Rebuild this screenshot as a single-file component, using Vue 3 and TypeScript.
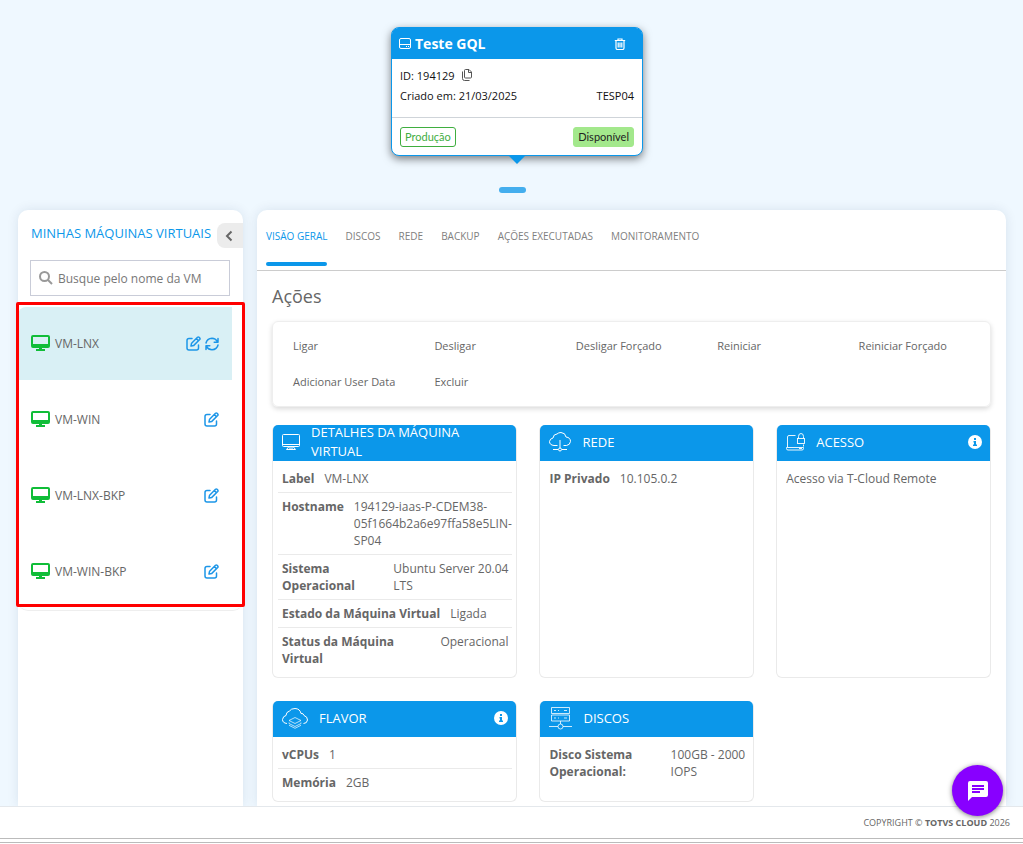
<script setup lang="ts">
import { computed, ref } from 'vue'

interface Row {
  label?: string
  /** Opening words of the value that stay together on one line. */
  lead?: string
  value: string
}

interface InfoCard {
  key: string
  title: string
  info?: boolean
  rows: Row[]
}

const tabs = ['Visão geral', 'Discos', 'Rede', 'Backup', 'Ações executadas', 'Monitoramento']
const activeTab = ref(tabs[0])

const machines = ['VM-LNX', 'VM-WIN', 'VM-LNX-BKP', 'VM-WIN-BKP']
const selected = ref(machines[0])
const query = ref('')
const visibleMachines = computed(() =>
  machines.filter((name) => name.toLowerCase().includes(query.value.toLowerCase())),
)

const actions = [
  'Ligar',
  'Desligar',
  'Desligar Forçado',
  'Reiniciar',
  'Reiniciar Forçado',
  'Adicionar User Data',
  'Excluir',
]

const cards: InfoCard[] = [
  {
    key: 'details',
    title: 'Detalhes da máquina virtual',
    rows: [
      { label: 'Label', value: 'VM-LNX' },
      { label: 'Hostname', value: '194129-iaas-P-CDEM38-05f1664b2a6e97ffa58e5LIN-SP04' },
      { label: 'Sistema Operacional', lead: 'Ubuntu Server 20.04', value: 'LTS' },
      { label: 'Estado da Máquina Virtual', value: 'Ligada' },
      { label: 'Status da Máquina Virtual', value: 'Operacional' },
    ],
  },
  { key: 'network', title: 'Rede', rows: [{ label: 'IP Privado', value: '10.105.0.2' }] },
  { key: 'access', title: 'Acesso', info: true, rows: [{ value: 'Acesso via T-Cloud Remote' }] },
  {
    key: 'flavor',
    title: 'Flavor',
    info: true,
    rows: [
      { label: 'vCPUs', value: '1' },
      { label: 'Memória', value: '2GB' },
    ],
  },
  {
    key: 'disks',
    title: 'Discos',
    rows: [{ label: 'Disco Sistema Operacional:', lead: '100GB - 2000', value: 'IOPS' }],
  },
]
</script>

<template>
  <div class="page">
    <main class="stage">
      <section class="carousel">
        <article class="env">
          <header class="env-head">
            <svg class="env-icon" viewBox="0 0 12 12" width="12" height="12" fill="none" stroke="currentColor">
              <rect x=".5" y=".5" width="11" height="10" rx="1.500" />
              <path d="M.5 6.500h11M7 8.500h1M9 8.500h1" />
            </svg>
            <h1>Teste GQL</h1>
            <button class="plain trash" type="button" aria-label="Excluir ambiente">
              <svg viewBox="0 0 12 12" width="12" height="12" fill="none" stroke="currentColor" stroke-width="1.200">
                <path d="M.8 2.500h10.400M4 2.500V1h4v1.500M2 2.500v7.500q0 1.500 1.500 1.500h5q1.500 0 1.500-1.500V2.500M4.200 4.500v5M6 4.500v5M7.800 4.500v5" />
              </svg>
            </button>
          </header>
          <div class="env-body">
            <p>
              <span>ID: 194129</span>
              <button class="plain copy" type="button" aria-label="Copiar ID">
                <svg viewBox="0 0 12 12" width="12" height="12" fill="none" stroke="currentColor">
                  <path d="M3.500 1.500q0-1 1-1H8L10.500 3v5q0 1-1 1h-5q-1 0-1-1zM7.500.5v3h3M1.500 2.500v7q0 2 2 2h5" />
                </svg>
              </button>
            </p>
            <p class="spread"><span>Criado em: 21/03/2025</span><span>TESP04</span></p>
          </div>
          <footer class="env-foot">
            <span class="badge outline">Produção</span>
            <span class="badge solid">Disponível</span>
          </footer>
        </article>
      </section>
      <button class="pager" type="button" aria-label="Página 1"></button>

      <div class="columns">
        <aside class="sidebar">
          <div class="side-head">
            <h2>Minhas máquinas virtuais</h2>
            <button class="collapse" type="button" aria-label="Recolher">
              <svg viewBox="0 0 8 12" width="8" height="12" fill="none" stroke="currentColor" stroke-width="2">
                <path d="M6.500 1.500L2 6l4.500 4.500" />
              </svg>
            </button>
          </div>
          <label class="search">
            <svg viewBox="0 0 14 14" width="14" height="14" fill="none" stroke="currentColor" stroke-width="2">
              <circle cx="5.500" cy="5.500" r="4.500" />
              <path d="M9 9l4 4" />
            </svg>
            <input v-model="query" type="text" placeholder="Busque pelo nome da VM" aria-label="Busque pelo nome da VM" />
          </label>
          <ul class="vms">
            <li v-for="name in visibleMachines" :key="name" :class="{ active: name === selected }">
              <button class="plain vm" type="button" @click="selected = name">
                <svg viewBox="0 0 19 17" width="19" height="17" fill="currentColor">
                  <path
                    fill-rule="evenodd"
                    d="M2 0h15q2 0 2 2v9q0 2-2 2H2q-2 0-2-2V2Q0 0 2 0zM2 2v7h15V2zM8 13h3v1h3v2H5v-2h3z"
                  />
                </svg>
                <span>{{ name }}</span>
              </button>
              <button class="plain tool" type="button" :aria-label="`Editar ${name}`">
                <svg viewBox="0 0 15 15" width="15" height="15" fill="none" stroke="currentColor" stroke-width="1.500" stroke-linejoin="round" stroke-linecap="round">
                  <path d="M6 2.500H3Q1 2.500 1 4.500V12q0 2 2 2h7.500q2 0 2-2V9M5 10l.6-2.800L11.500 1.300q.8-.7 1.600 0l.6.600q.7.8 0 1.600L7.800 9.400zM10.300 2.500l2.200 2.200" />
                </svg>
              </button>
              <button v-if="name === selected" class="plain tool" type="button" aria-label="Atualizar">
                <svg viewBox="0 0 14 14" width="14" height="14" fill="none" stroke="currentColor" stroke-width="1.500" stroke-linejoin="round" stroke-linecap="round">
                  <path d="M1 6Q2 1.500 7 1.200q3.500 0 5.600 3.500M13 1.500v3.800H9.200M13 8q-1 4.500-6 4.800-3.500 0-5.600-3.500M1 12.500V8.700h3.800" />
                </svg>
              </button>
            </li>
          </ul>
        </aside>

        <section class="panel">
          <nav class="tabs">
            <button
              v-for="tab in tabs"
              :key="tab"
              type="button"
              :class="{ current: tab === activeTab }"
              @click="activeTab = tab"
            >
              {{ tab }}
            </button>
          </nav>
          <div class="content">
            <h2>Ações</h2>
            <div class="actions">
              <button v-for="action in actions" :key="action" type="button">{{ action }}</button>
            </div>
            <div class="cards">
              <article v-for="card in cards" :key="card.key" class="card">
                <header>
                  <svg v-if="card.key === 'details'" viewBox="0 0 18 17" width="18" height="17" fill="none" stroke="currentColor">
                    <rect x=".5" y=".5" width="17" height="12" rx="1" />
                    <path d="M.5 10.500h17M7 12.500l-2.500 3h9l-2.500-3M7 14h4" />
                  </svg>
                  <svg v-else-if="card.key === 'network'" viewBox="0 0 22 20" width="22" height="20" fill="none" stroke="currentColor">
                    <path d="M8.500 13.500H5Q.5 13 .5 9.500 1 6.500 4 6 4.500 2 8 2q1.500-1.500 4-1.500Q16.500.8 17 5q4.500.5 4.500 4.500-.5 3.500-4 4h-3M11 8v8M4 17.500h5M13 17.500h5" />
                    <circle cx="11" cy="17.500" r="1.500" />
                  </svg>
                  <svg v-else-if="card.key === 'access'" viewBox="0 0 19 18" width="19" height="18" fill="none" stroke="currentColor" stroke-width=".9">
                    <path d="M9.500 2.500H3q-1.500 0-1.500 1.500v10M17.500 11.500v2M.5 14.500h17v1q0 1.500-1.500 1.500H2q-1.500 0-1.500-1.500zM13 15.500h3M12.500 5.500V3.500q0-3 2.500-3t2.500 3v2" />
                    <rect x="11.500" y="5.500" width="7" height="5" />
                  </svg>
                  <svg v-else-if="card.key === 'flavor'" viewBox="0 0 26 21" width="26" height="21" fill="none" stroke="currentColor">
                    <path d="M5 15.500Q.5 15 .5 11.500 1 8 4 7.500 4 4 7.500 3 9 .5 13 .5q5 .2 6 5 2.500-.5 3 2 3.500 1 3.500 4.500-.5 3.500-4 3.500" />
                    <path stroke-width=".7" d="M7 12.500l6-3 6 3-6 3zM7 14.500v1l6 3 6-3v-1M7 17.300l6 3 6-3" />
                  </svg>
                  <svg v-else viewBox="0 0 23 23" width="23" height="23" fill="none" stroke="currentColor" stroke-width=".8">
                    <path d="M2.500.5h18v6h-18zM2.500 8h18v6h-18zM5 3.500h2M15 3.500h3M5 11h2M15 11h3M9 3.500h1M9 11h1M11.500 14v3M0 19.500h9M14 19.500h9" />
                    <circle cx="11.500" cy="19.500" r="2.500" />
                  </svg>
                  <h3>{{ card.title }}</h3>
                  <button v-if="card.info" class="plain info" type="button" aria-label="Informações">
                    <svg viewBox="0 0 14 14" width="14" height="14">
                      <circle cx="7" cy="7" r="7" fill="#fff" />
                      <path d="M6 3h2v2H6zM5.500 6H8v3.500h1V11H5V9.500h1v-2h-.5z" fill="#0b97ea" />
                    </svg>
                  </button>
                </header>
                <dl>
                  <div v-for="row in card.rows" :key="row.value">
                    <dt v-if="row.label">{{ row.label }}</dt>
                    <dd><span v-if="row.lead" class="lead">{{ row.lead }}</span> {{ row.value }}</dd>
                  </div>
                </dl>
              </article>
            </div>
          </div>
        </section>
      </div>
    </main>

    <footer class="copyright">COPYRIGHT © <b>TOTVS CLOUD</b> 2026</footer>
    <div class="frame"></div>

    <button class="chat" type="button" aria-label="Abrir chat">
      <svg viewBox="0 0 20 20" width="20" height="20">
        <path d="M2 0h16q2 0 2 2v12q0 2-2 2H4l-4 4V2Q0 0 2 0z" fill="#fff" />
        <path d="M4 5h12M4 8h12M4 11h8" stroke="#8800ff" stroke-width="2" />
      </svg>
    </button>
  </div>
</template>

<style>
body {
  margin: 0;
  background: #fff;
}
</style>

<style scoped>
* {
  box-sizing: border-box;
}

.page {
  font-family: 'Open Sans', 'Noto Sans', sans-serif;
  font-size: 12px;
  line-height: 17px;
  color: #666;
}

h1,
h2,
h3,
p,
ul,
dl,
dd {
  margin: 0;
  padding: 0;
}

svg {
  display: block;
  flex: none;
}

button {
  font: inherit;
  color: inherit;
  cursor: pointer;
}

.plain {
  display: flex;
  padding: 0;
  border: 0;
  background: none;
}

.stage {
  display: flex;
  flex-direction: column;
  align-items: center;
  padding: 27px 17px 0 18px;
  overflow: hidden;
  background: #eff8ff;
}

.carousel {
  padding-left: 10px;
}

.env {
  position: relative;
  width: 252px;
  border: 1px solid #0b97ea;
  border-radius: 8px;
  background: #fff;
  box-shadow: 0 3px 8px rgba(0, 0, 0, 0.5);
  font-size: 11px;
  color: #111;
}

.env::after {
  content: '';
  position: absolute;
  top: 100%;
  left: 50%;
  margin-left: -9px;
  border: 9px solid transparent;
  border-top-color: #0b97ea;
  border-bottom: 0;
}

.env-head {
  display: flex;
  align-items: center;
  gap: 4px;
  height: 31px;
  padding: 0 16px 0 7px;
  border-radius: 6px 6px 0 0;
  background: #0b97ea;
  color: #fff;
}

.env-head h1 {
  flex: 1;
  font-size: 14px;
  font-weight: 700;
}

.env-body {
  padding: 6px 8px 12px;
  border-bottom: 1px solid #cfd4d9;
}

.env-body p {
  display: flex;
  align-items: center;
  gap: 6px;
  height: 20px;
}

.env-body .spread {
  justify-content: space-between;
}

.copy {
  color: #555;
}

.env-foot {
  display: flex;
  justify-content: space-between;
  padding: 9px 8px 8px;
}

.badge {
  height: 20px;
  padding: 0 4px;
  border: 1px solid #3fae3f;
  border-radius: 3px;
  font-family: Lato, 'Open Sans', sans-serif;
  font-size: 11px;
  line-height: 18px;
}

.outline {
  color: #3fae3f;
}

.solid {
  border-color: #a3e88c;
  background: #a3e88c;
  color: #222;
}

.pager {
  width: 27px;
  height: 6px;
  margin: 31px 0 17px;
  padding: 0;
  border: 0;
  border-radius: 3px;
  background: #44aeee;
}

.columns {
  display: flex;
  gap: 14px;
  width: 100%;
}

.sidebar,
.panel {
  border-radius: 10px 10px 0 0;
  background: #fff;
  box-shadow: 0 0 12px rgba(0, 40, 80, 0.1);
}

.sidebar {
  flex: none;
  width: 225px;
}

.side-head {
  display: flex;
  align-items: flex-start;
  justify-content: space-between;
  padding: 13px 0 12px 13px;
}

.side-head h2 {
  font-size: 13px;
  font-weight: 400;
  line-height: 21px;
  text-transform: uppercase;
  white-space: nowrap;
  color: #0b97ea;
}

.collapse {
  display: flex;
  align-items: center;
  width: 26px;
  height: 25px;
  padding: 0 0 0 8px;
  border: 0;
  border-radius: 8px 0 0 8px;
  background: #ececec;
}

.search {
  display: flex;
  align-items: center;
  gap: 5px;
  height: 36px;
  margin: 0 13px 0 12px;
  padding: 0 8px;
  border: 1px solid #c9ccd8;
  color: #999;
}

.search input {
  flex: 1;
  min-width: 0;
  padding: 0;
  border: 0;
  outline: 0;
  background: none;
  font: inherit;
  color: #666;
}

.search input::placeholder {
  color: #777;
  opacity: 1;
}

.vms {
  position: relative;
  display: flex;
  flex-direction: column;
  gap: 3px;
  margin-top: 11px;
  padding-bottom: 2px;
  border: 1px solid #eee;
  border-width: 0 0 1px;
  border-radius: 10px;
  list-style: none;
}

.vms::after {
  content: '';
  position: absolute;
  inset: -5px -2px 3px;
  border: 3px solid #f00;
  border-radius: 2px;
  pointer-events: none;
}

.vms li {
  display: flex;
  align-items: center;
  gap: 4px;
  height: 73px;
  margin-right: 11px;
  padding: 0 13px;
}

.vms .active {
  border-radius: 8px 0 0;
  background: #d9f0f5;
}

.vm {
  flex: 1;
  align-items: center;
  gap: 5px;
}

.vm svg {
  color: #10bd38;
}

.tool {
  color: #1d96e8;
}

.panel {
  flex: 1;
  min-width: 0;
}

.tabs {
  display: flex;
  gap: 18px;
  padding: 0 9px 4px;
  border-bottom: 1px solid #ccc;
}

.tabs button {
  position: relative;
  height: 56px;
  padding: 0 0 4px;
  border: 0;
  background: none;
  font-size: 10px;
  text-transform: uppercase;
  white-space: nowrap;
  color: #808080;
}

.tabs .current {
  color: #0b97ea;
}

.tabs .current::after {
  content: '';
  position: absolute;
  inset: auto 0 0;
  height: 4px;
  border-radius: 2px;
  background: #0b97ea;
}

.content {
  padding: 12px 15px 4px;
}

.content h2 {
  font-size: 18px;
  font-weight: 400;
  line-height: 26px;
}

.actions {
  display: grid;
  grid-template-columns: repeat(5, 1fr);
  margin: 12px 0 18px;
  padding: 5px 5px 7px;
  border: 1px solid #eee;
  border-radius: 6px;
  box-shadow: 0 2px 5px rgba(0, 0, 0, 0.15);
}

.actions button {
  height: 36px;
  padding: 0 15px;
  border: 0;
  background: none;
  font-size: 11px;
  text-align: left;
}

.cards {
  display: grid;
  grid-template-columns: minmax(0, 8fr) minmax(0, 7fr) minmax(0, 7fr);
  gap: 23px 22px;
}

.card {
  border: 1px solid #eaeaea;
  border-top: 0;
  border-radius: 6px;
}

.card header {
  display: flex;
  align-items: center;
  gap: 11px;
  height: 36px;
  padding: 0 8px 2px 9px;
  border-radius: 5px 5px 0 0;
  background: #0b97ea;
  color: #fff;
}

.card h3 {
  flex: 1;
  font-size: 13px;
  font-weight: 400;
  line-height: 19px;
  text-transform: uppercase;
}

.card dl {
  padding: 4px 4px 5px 5px;
}

.card dl div {
  display: flex;
  gap: 10px;
  padding: 5px 4px;
  border-bottom: 1px solid #eaeaea;
}

.card dl div:last-child {
  border-bottom: 0;
}

dt {
  font-weight: 700;
}

.lead {
  white-space: nowrap;
}

.copyright {
  padding: 8px 13px 7px;
  border-top: 1px solid #e4e8ec;
  font-size: 9px;
  line-height: 16px;
  text-align: right;
}

.frame {
  height: 5px;
  border: 1px solid #bbb;
  border-width: 1px 0;
}

.chat {
  position: fixed;
  right: 20px;
  bottom: 28px;
  display: grid;
  place-items: center;
  width: 51px;
  height: 51px;
  padding: 0;
  border: 0;
  border-radius: 50%;
  background: #8800ff;
  box-shadow: 0 1px 5px rgba(0, 0, 0, 0.5);
}
</style>
